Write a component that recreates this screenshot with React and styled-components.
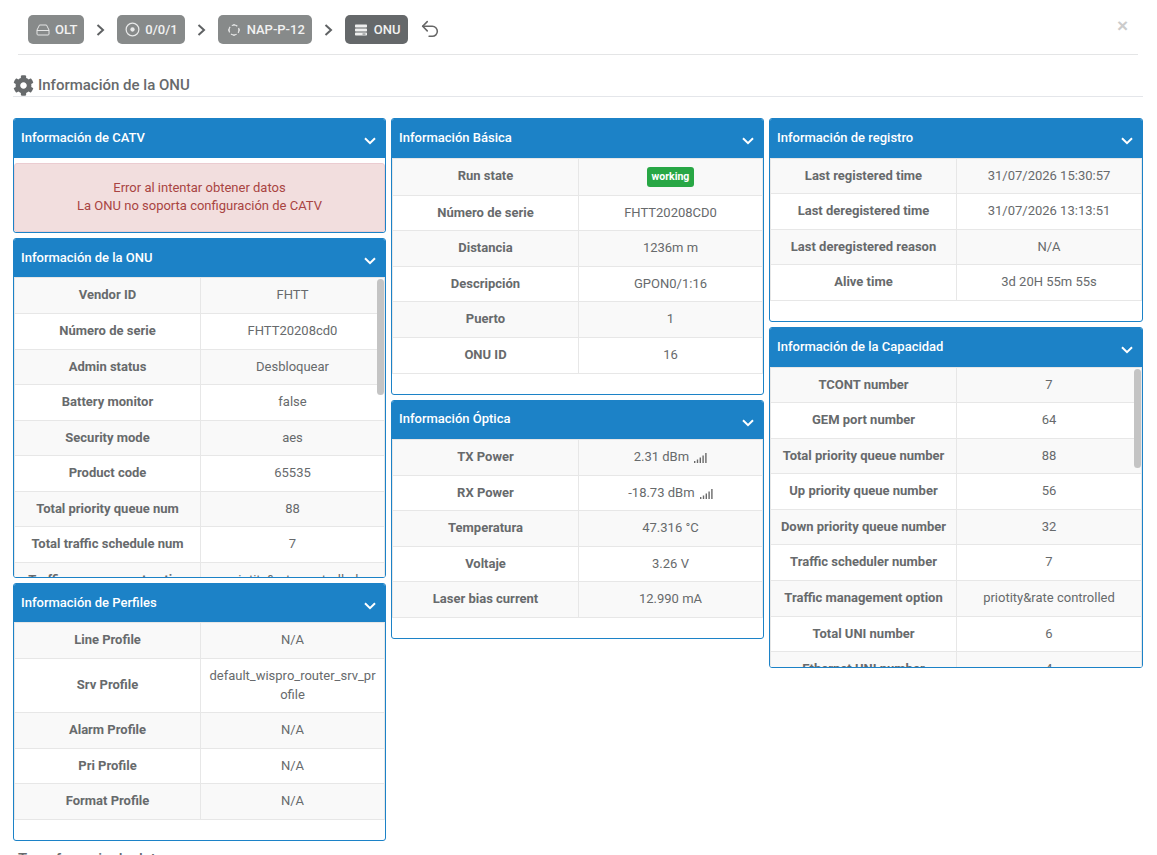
import React from "react";
import styled, { createGlobalStyle } from "styled-components";
import { FaCog } from "react-icons/fa";
import { Undo2 } from "lucide-react";

const GlobalStyle = createGlobalStyle`
  html, body {
    margin: 0;
    padding: 0;
    background: #fff;
    overflow: hidden;
  }
  body {
    font-family: Roboto, "Liberation Sans", sans-serif;
    font-size: 13px;
    color: #676a6c;
  }
`;

const Page = styled.div`
  height: 855px;
  overflow: hidden;
  padding: 0 14px 0 13px;
`;

const TopBar = styled.div`
  position: relative;
  display: flex;
  align-items: flex-start;
  height: 55px;
  margin: 0 5px;
  padding: 15px 0 0 10px;
  box-sizing: border-box;
  border-bottom: 1px solid #e4e5e6;
`;

const Crumb = styled.div`
  display: flex;
  align-items: center;
  gap: 5px;
  height: 29px;
  padding: 0 7px 0 8px;
  border-radius: 5px;
  background: ${(p) => (p.$active ? "#65686a" : "#878a8a")};
  color: #f1f1f1;
  font-size: 13px;
  font-weight: 500;
`;

const SeparatorBox = styled.div`
  display: flex;
  align-items: center;
  justify-content: center;
  width: 33px;
  height: 29px;
`;

const BackButton = styled.div`
  display: flex;
  margin: 3px 0 0 11px;
`;

const CloseMark = styled.div`
  position: absolute;
  top: 14px;
  right: 10px;
  color: #cccccc;
  font-family: "Liberation Sans", sans-serif;
  font-size: 19px;
  font-weight: 700;
  line-height: 24px;
`;

const SectionTitle = styled.div`
  display: flex;
  align-items: center;
  gap: 4px;
  height: 42px;
  margin-bottom: 21px;
  padding: 19px 0 0 0;
  box-sizing: border-box;
  border-bottom: 1px solid #e4e6ea;
  color: #676a6c;
  font-size: 15px;
  font-weight: 500;
`;

const Columns = styled.div`
  display: grid;
  grid-template-columns: 373px 373px 1fr;
  gap: 5px;
  align-items: start;
`;

const Column = styled.div`
  display: flex;
  flex-direction: column;
  gap: 5px;
`;

const Panel = styled.div`
  box-sizing: border-box;
  height: ${(p) => (p.$height ? `${p.$height}px` : "auto")};
  overflow: hidden;
  border: 1px solid #1c82c7;
  border-radius: 3px;
  background: #fff;
`;

const PanelHeader = styled.div`
  display: flex;
  align-items: center;
  justify-content: space-between;
  box-sizing: border-box;
  height: 38.7px;
  padding: 0 9px 0 7px;
  background: #1c82c7;
  color: #fff;
`;

const PanelTitle = styled.div`
  padding-bottom: 2px;
  font-size: 13px;
  font-weight: 500;
`;

const ChevronBox = styled.div`
  display: flex;
  margin-top: 6px;
`;

const ScrollBody = styled.div`
  position: relative;
  height: calc(100% - 38.7px);
  overflow: hidden;
`;

const Thumb = styled.div`
  position: absolute;
  top: 2px;
  right: 1px;
  width: 7px;
  height: ${(p) => p.$height}px;
  border-radius: 4px;
  background: #c4c4c4;
`;

const Table = styled.table`
  width: 100%;
  margin-bottom: 20px;
  border-collapse: collapse;
  table-layout: fixed;

  tr:nth-child(odd) {
    background: #f9f9f9;
  }
`;

const Label = styled.th`
  box-sizing: border-box;
  width: 186px;
  padding: 8px;
  border: 1px solid #e7e7e7;
  color: #676a6c;
  font-size: 13px;
  font-weight: 700;
  line-height: 18.57px;
  text-align: center;
`;

const Value = styled.td`
  padding: 8px;
  border: 1px solid #e7e7e7;
  color: #676a6c;
  font-size: 13px;
  line-height: 18.57px;
  text-align: center;
  word-break: break-all;
`;

const Badge = styled.span`
  display: inline-block;
  height: 20px;
  padding: 0 5px;
  border-radius: 3px;
  background: #28a745;
  color: #fff;
  font-size: 10.5px;
  font-weight: 700;
  line-height: 20px;
  vertical-align: top;
`;

const SignalBox = styled.span`
  display: inline-block;
  height: 10px;
  margin-left: 2px;
  line-height: 0;
  vertical-align: -2px;

  svg {
    display: block;
  }
`;

const ErrorBox = styled.div`
  margin-top: 5px;
  padding: 15px;
  box-sizing: border-box;
  height: 69px;
  border: 1px solid #ebccd1;
  border-radius: 3px;
  background: #f2dede;
  color: #a94442;
  font-size: 13px;
  line-height: 18px;
  text-align: center;
`;

const FooterTitle = styled.div`
  margin-top: 4px;
  padding-left: 5px;
  color: #676a6c;
  font-size: 15px;
  font-weight: 500;
  line-height: 18px;
`;

const ChevronDown = () => (
  <ChevronBox>
    <svg width="12" height="8" viewBox="0 0 12 8" fill="none">
      <path d="M1 1.2 L6 6.2 L11 1.2" stroke="#fff" strokeWidth="2" />
    </svg>
  </ChevronBox>
);

const Separator = () => (
  <SeparatorBox>
    <svg width="9" height="12" viewBox="0 0 9 12" fill="none">
      <path d="M1.5 1 L7 6 L1.5 11" stroke="#5f6264" strokeWidth="2" />
    </svg>
  </SeparatorBox>
);

const OltIcon = () => (
  <svg width="14" height="12" viewBox="0 0 14 12" fill="none" stroke="#e4e5e5" strokeWidth="1">
    <path d="M3.5 1 H10.5 L13 6 V10 A1 1 0 0 1 12 11 H2 A1 1 0 0 1 1 10 V6 Z" />
    <path d="M1 6.5 H13" />
  </svg>
);

const PortIcon = () => (
  <svg width="15" height="15" viewBox="0 0 16 16" fill="none">
    <circle cx="8" cy="8" r="6.8" stroke="#e8e9e9" strokeWidth="1.3" />
    <circle cx="8" cy="8" r="2.3" fill="#e8e9e9" />
  </svg>
);

const NapIcon = () => (
  <svg width="16" height="14" viewBox="-1 0 16 14" fill="none" stroke="#e8e9e9" strokeWidth="1.2">
    <circle cx="7" cy="7" r="5" strokeDasharray="5.85 2" strokeDashoffset="2.9" />
    <circle cx="7" cy="1.8" r="0.8" fill="#e8e9e9" stroke="none" />
    <circle cx="12.2" cy="7" r="0.8" fill="#e8e9e9" stroke="none" />
    <circle cx="7" cy="12.2" r="0.8" fill="#e8e9e9" stroke="none" />
    <circle cx="1.8" cy="7" r="0.8" fill="#e8e9e9" stroke="none" />
  </svg>
);

const ServerIcon = () => (
  <svg width="16" height="12" viewBox="-2 0 16 12">
    <rect x="0" y="0.5" width="12" height="3" rx="0.7" fill="#eeeeee" />
    <rect x="0" y="4.5" width="12" height="3" rx="0.7" fill="#eeeeee" />
    <rect x="0" y="8.5" width="12" height="3" rx="0.7" fill="#eeeeee" />
    <rect x="7.5" y="9.6" width="3" height="0.9" fill="#65686a" />
  </svg>
);

const SignalIcon = () => (
  <SignalBox>
    <svg width="13" height="10" viewBox="0 0 13 10" fill="#6a6a6a">
      <rect x="0" y="8" width="1.4" height="2" />
      <rect x="2.8" y="6.5" width="1.4" height="3.5" />
      <rect x="5.6" y="4.5" width="1.4" height="5.5" />
      <rect x="8.4" y="2.5" width="1.4" height="7.5" />
      <rect x="11.2" y="0" width="1.4" height="10" />
    </svg>
  </SignalBox>
);

const InfoPanel = ({ title, height, children }) => (
  <Panel $height={height}>
    <PanelHeader>
      <PanelTitle>{title}</PanelTitle>
      <ChevronDown />
    </PanelHeader>
    {children}
  </Panel>
);

const InfoTable = ({ rows }) => (
  <Table>
    <tbody>
      {rows.map(([label, value], i) => (
        <tr key={label + i}>
          <Label>{label}</Label>
          <Value>{value}</Value>
        </tr>
      ))}
    </tbody>
  </Table>
);

const onuRows = [
  ["Vendor ID", "FHTT"],
  ["Número de serie", "FHTT20208cd0"],
  ["Admin status", "Desbloquear"],
  ["Battery monitor", "false"],
  ["Security mode", "aes"],
  ["Product code", "65535"],
  ["Total priority queue num", "88"],
  ["Total traffic schedule num", "7"],
  ["Traffic management option", "priotity&rate controlled"],
];

const profileRows = [
  ["Line Profile", "N/A"],
  ["Srv Profile", "default_wispro_router_srv_profile"],
  ["Alarm Profile", "N/A"],
  ["Pri Profile", "N/A"],
  ["Format Profile", "N/A"],
];

const basicRows = [
  ["Run state", <Badge>working</Badge>],
  ["Número de serie", "FHTT20208CD0"],
  ["Distancia", "1236m m"],
  ["Descripción", "GPON0/1:16"],
  ["Puerto", "1"],
  ["ONU ID", "16"],
];

const opticalRows = [
  ["TX Power", <>2.31 dBm <SignalIcon /></>],
  ["RX Power", <>-18.73 dBm <SignalIcon /></>],
  ["Temperatura", "47.316 °C"],
  ["Voltaje", "3.26 V"],
  ["Laser bias current", "12.990 mA"],
];

const registerRows = [
  ["Last registered time", "31/07/2026 15:30:57"],
  ["Last deregistered time", "31/07/2026 13:13:51"],
  ["Last deregistered reason", "N/A"],
  ["Alive time", "3d 20H 55m 55s"],
];

const capacityRows = [
  ["TCONT number", "7"],
  ["GEM port number", "64"],
  ["Total priority queue number", "88"],
  ["Up priority queue number", "56"],
  ["Down priority queue number", "32"],
  ["Traffic scheduler number", "7"],
  ["Traffic management option", "priotity&rate controlled"],
  ["Total UNI number", "6"],
  ["Ethernet UNI number", "4"],
];

const App = () => (
  <Page>
    <GlobalStyle />
    <TopBar>
      <Crumb><OltIcon />OLT</Crumb>
      <Separator />
      <Crumb><PortIcon />0/0/1</Crumb>
      <Separator />
      <Crumb><NapIcon />NAP-P-12</Crumb>
      <Separator />
      <Crumb $active><ServerIcon />ONU</Crumb>
      <BackButton><Undo2 size={22} strokeWidth={1.7} color="#666" /></BackButton>
      <CloseMark>×</CloseMark>
    </TopBar>
    <SectionTitle>
      <FaCog size={21} color="#676a6c" />
      Información de la ONU
    </SectionTitle>
    <Columns>
      <Column>
        <InfoPanel title="Información de CATV">
          <ErrorBox>
            Error al intentar obtener datos
            <br />
            La ONU no soporta configuración de CATV
          </ErrorBox>
        </InfoPanel>
        <InfoPanel title="Información de la ONU" height={340}>
          <ScrollBody>
            <InfoTable rows={onuRows} />
            <Thumb $height={116} />
          </ScrollBody>
        </InfoPanel>
        <InfoPanel title="Información de Perfiles">
          <InfoTable rows={profileRows} />
        </InfoPanel>
        <FooterTitle>Transferencia de datos</FooterTitle>
      </Column>
      <Column>
        <InfoPanel title="Información Básica">
          <InfoTable rows={basicRows} />
        </InfoPanel>
        <InfoPanel title="Información Óptica">
          <InfoTable rows={opticalRows} />
        </InfoPanel>
      </Column>
      <Column>
        <InfoPanel title="Información de registro">
          <InfoTable rows={registerRows} />
        </InfoPanel>
        <InfoPanel title="Información de la Capacidad" height={341}>
          <ScrollBody>
            <InfoTable rows={capacityRows} />
            <Thumb $height={99} />
          </ScrollBody>
        </InfoPanel>
      </Column>
    </Columns>
  </Page>
);

export default App;
